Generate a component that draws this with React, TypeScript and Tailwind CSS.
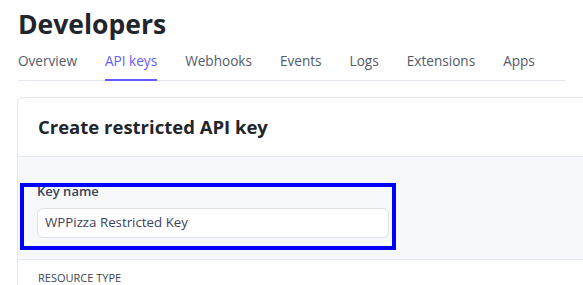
import React from 'react';

const tabs = ['Overview', 'API keys', 'Webhooks', 'Events', 'Logs', 'Extensions', 'Apps'];

const App: React.FC = () => {
  return (
    <div className="relative h-[285px] w-[583px] overflow-hidden bg-white text-[#1a1f36] [font-family:'Open_Sans','Noto_Sans',sans-serif]">
      {/* Page header */}
      <div className="px-[18px]">
        <h1 className="pt-[4px] text-[26.5px] font-bold leading-[40px] text-[#21252c]">Developers</h1>
        <div className="mt-[7px] flex gap-[28px] border-b border-[#e3e8ee]">
          {tabs.map((t, i) => (
            <div
              key={t}
              className={`-mb-px pb-[8px] text-[13.6px] leading-[20px] ${
                i === 1 ? 'border-b-[2px] border-[#635bff] font-medium text-[#635bff]' : 'border-b-[2px] border-transparent text-[#545969]'
              }`}
            >
              {t}
            </div>
          ))}
        </div>
      </div>

      {/* Card */}
      <div className="mt-[16px] ml-[17px] w-[620px] rounded-t-[6px] border border-[#e3e8ee]">
        <div className="flex h-[58px] items-center px-[20px]">
          <h2 className="text-[18.5px] font-bold text-[#21252c]">Create restricted API key</h2>
        </div>
        <div className="border-y border-[#e3e8ee] bg-[#f6f8fa] px-[19px] pt-[26px] pb-[21px]">
          <label className="block text-[13px] font-semibold leading-[16px] text-[#3c4257]">Key name</label>
          <div className="mt-[9px] flex h-[30px] w-[352px] items-center rounded-[6px] border border-[#dfe3e8] bg-white px-[7px] text-[13.3px] text-[#3c4257]">
            WPPizza Restricted Key
          </div>
        </div>
        <div className="px-[20px] pt-[11px] text-[11px] leading-[14px] uppercase text-[#3c4257]">Resource type</div>
      </div>

      {/* Highlight annotation */}
      <div className="absolute left-[20px] top-[183px] h-[67px] w-[376px] border-[4px] border-[#0000ff]" />
    </div>
  );
};

export default App;
